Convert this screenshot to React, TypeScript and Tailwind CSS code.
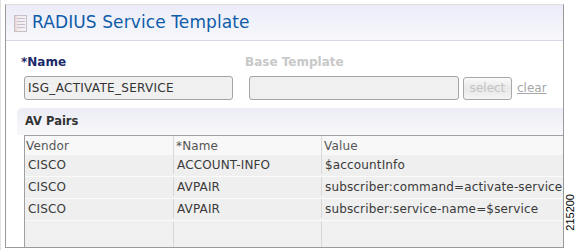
import React from "react";

const rows = [
  ["CISCO", "ACCOUNT-INFO", "$accountInfo"],
  ["CISCO", "AVPAIR", "subscriber:command=activate-service"],
  ["CISCO", "AVPAIR", "subscriber:service-name=$service"],
];

function DocIcon() {
  return (
    <svg width="13" height="17" viewBox="0 0 13 17">
      <defs>
        <linearGradient id="dg" x1="0" x2="1" y1="0" y2="0">
          <stop offset="0" stopColor="#e8c8c8" />
          <stop offset="0.25" stopColor="#f4eaea" />
          <stop offset="1" stopColor="#f2f2f6" />
        </linearGradient>
      </defs>
      <rect x="0.5" y="0.5" width="12" height="16" fill="url(#dg)" stroke="#c8c0c8" />
      <line x1="3" y1="3.5" x2="11" y2="3.5" stroke="#c0c0d0" />
      <line x1="3" y1="6.5" x2="11" y2="6.5" stroke="#c0c0d0" />
      <line x1="3" y1="9.5" x2="11" y2="9.5" stroke="#c0c0d0" />
      <line x1="3" y1="12.5" x2="11" y2="12.5" stroke="#c0c0d0" />
    </svg>
  );
}

export default function App() {
  return (
    <div
      className="w-[577px] h-[250px] bg-white relative overflow-hidden border-l border-[#e2e2e2]"
      style={{ fontFamily: '"DejaVu Sans", Verdana, sans-serif' }}
    >
      <div className="ml-[4px] mt-[4px] w-[559px] h-[244px] border-l border-r border-b border-[#9a9a9a] border-t border-t-[#dedede] overflow-hidden flex flex-col">
        {/* header */}
        <div className="h-[36px] shrink-0 flex items-center bg-gradient-to-b from-[#ececf8] to-[#f7f7fc] border-b border-[#d6d6ea]">
          <div className="ml-[8px] mt-[1px]">
            <DocIcon />
          </div>
          <div className="ml-[5px] text-[17px] text-[#0e5ca8] leading-none tracking-[0.1px]">
            RADIUS Service Template
          </div>
        </div>
        {/* form */}
        <div className="flex pt-[14px] h-[67px] shrink-0">
          <div className="ml-[15px] w-[225px] flex flex-col">
            <div className="text-[12px] font-bold text-[#1c2a68] leading-none h-[20px] pt-[1px]">*Name</div>
            <div className="ml-[3px] w-[209px] h-[24px] bg-[#f0f0f0] border border-[#a4a4a4] rounded-[3px] flex items-center pl-[3px] text-[12px] tracking-[0.3px] text-[#333] mt-[1px]">
              ISG_ACTIVATE_SERVICE
            </div>
          </div>
          <div className="ml-[-1px] flex flex-col">
            <div className="text-[12px] font-bold text-[#c8c8c8] leading-none h-[20px] pt-[1px]">Base Template</div>
            <div className="flex items-center mt-[1px]">
              <div className="ml-[4px] w-[210px] h-[24px] bg-[#f0f0f0] border border-[#a4a4a4] rounded-[3px]" />
              <div className="ml-[4px] w-[49px] h-[23px] border border-[#a8a8a8] rounded-[3px] bg-gradient-to-b from-[#fafafa] via-[#e8e8e8] to-[#f4f4f4] flex items-center justify-center text-[12px] text-[#c4c4c4]">
                select
              </div>
              <div className="ml-[5px] text-[12px] text-[#a8a8a8] underline">clear</div>
            </div>
          </div>
        </div>
        {/* AV pairs */}
        <div className="ml-[11px] flex-1 flex flex-col">
          <div className="h-[27px] shrink-0 rounded-tl-[5px] bg-gradient-to-b from-[#ececf6] to-[#f8f8fb] flex items-center pl-[8px] text-[11.5px] font-bold text-[#333]">
            AV Pairs
          </div>
          <div className="ml-[7px] flex-1 border-t border-l border-[#a0a0a0] bg-[#f2f2f2] text-[12px] tracking-[0.15px] text-[#3a3a3a] flex flex-col">
            <div className="flex h-[19px] bg-[#f8f8f8] items-center text-[#555]">
              <div className="w-[148px] pl-[1px]">Vendor</div>
              <div className="w-[148px] border-l border-[#d8d8d8] pl-[2px] h-full flex items-center">*Name</div>
              <div className="flex-1 border-l border-[#d8d8d8] pl-[2px] h-full flex items-center">Value</div>
            </div>
            {rows.map((r, i) => (
              <div key={i} className="flex h-[22px] bg-[#efefef] border-b border-[#fafafa] items-center pb-[2px]">
                <div className="w-[148px] pl-[3px]">{r[0]}</div>
                <div className="w-[148px] border-l border-[#d8d8d8] pl-[3px] h-full flex items-center">{r[1]}</div>
                <div className="flex-1 border-l border-[#d8d8d8] pl-[3px] h-full flex items-center whitespace-nowrap">{r[2]}</div>
              </div>
            ))}
            <div className="flex flex-1 bg-[#f0f0f0]">
              <div className="w-[148px]" />
              <div className="w-[148px] border-l border-[#d8d8d8]" />
              <div className="flex-1 border-l border-[#d8d8d8]" />
            </div>
          </div>
        </div>
      </div>
      <div
        className="absolute left-[564px] top-[194px] text-[11px] text-black leading-none"
        style={{ fontFamily: '"Liberation Sans", Arial, sans-serif', writingMode: "vertical-rl", transform: "rotate(180deg)" }}
      >
        215200
      </div>
    </div>
  );
}
